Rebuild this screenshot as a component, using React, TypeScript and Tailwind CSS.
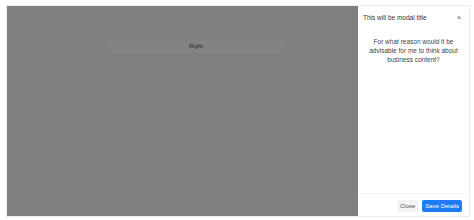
export default function App() {
  return (
    <div className="h-[220px] w-[474px] bg-white pl-[6px] pr-[4px] pt-[5px] pb-[3px] font-['Liberation_Sans',Arial,sans-serif]">
      <div className="flex h-full border border-[#ececec]">
        {/* page content under the backdrop */}
        <div className="flex-1 bg-[#7f7f7f] pt-[34px]">
          <div className="ml-[100px] flex h-[13px] w-[178px] items-center justify-center bg-[#838383] text-[6px] text-[#2a2a2a]">
            Right
          </div>
        </div>

        {/* offcanvas panel */}
        <div className="flex w-[111px] flex-col bg-white">
          <div className="flex items-center justify-between pl-[5px] pr-[8px] pt-[7px]">
            <span className="text-[6.5px] text-[#333]">This will be modal title</span>
            <span className="text-[7px] leading-none text-[#666]">×</span>
          </div>
          <p className="mt-[14px] px-[8px] text-center text-[6.5px] leading-[9px] text-[#444]">
            For what reason would it be advisable for me to think about business content?
          </p>
          <div className="mt-auto flex items-center justify-end gap-[4px] border-t border-[#f4f4f4] pr-[7px] pt-[6px] pb-[4px]">
            <button className="h-[12px] rounded-[2px] bg-[#f3f3f3] px-[3px] text-[6px] text-[#555]">
              Close
            </button>
            <button className="h-[12px] rounded-[2px] bg-[#1c7cf4] px-[3px] text-[6px] text-white">
              Save Details
            </button>
          </div>
        </div>
      </div>
    </div>
  );
}
